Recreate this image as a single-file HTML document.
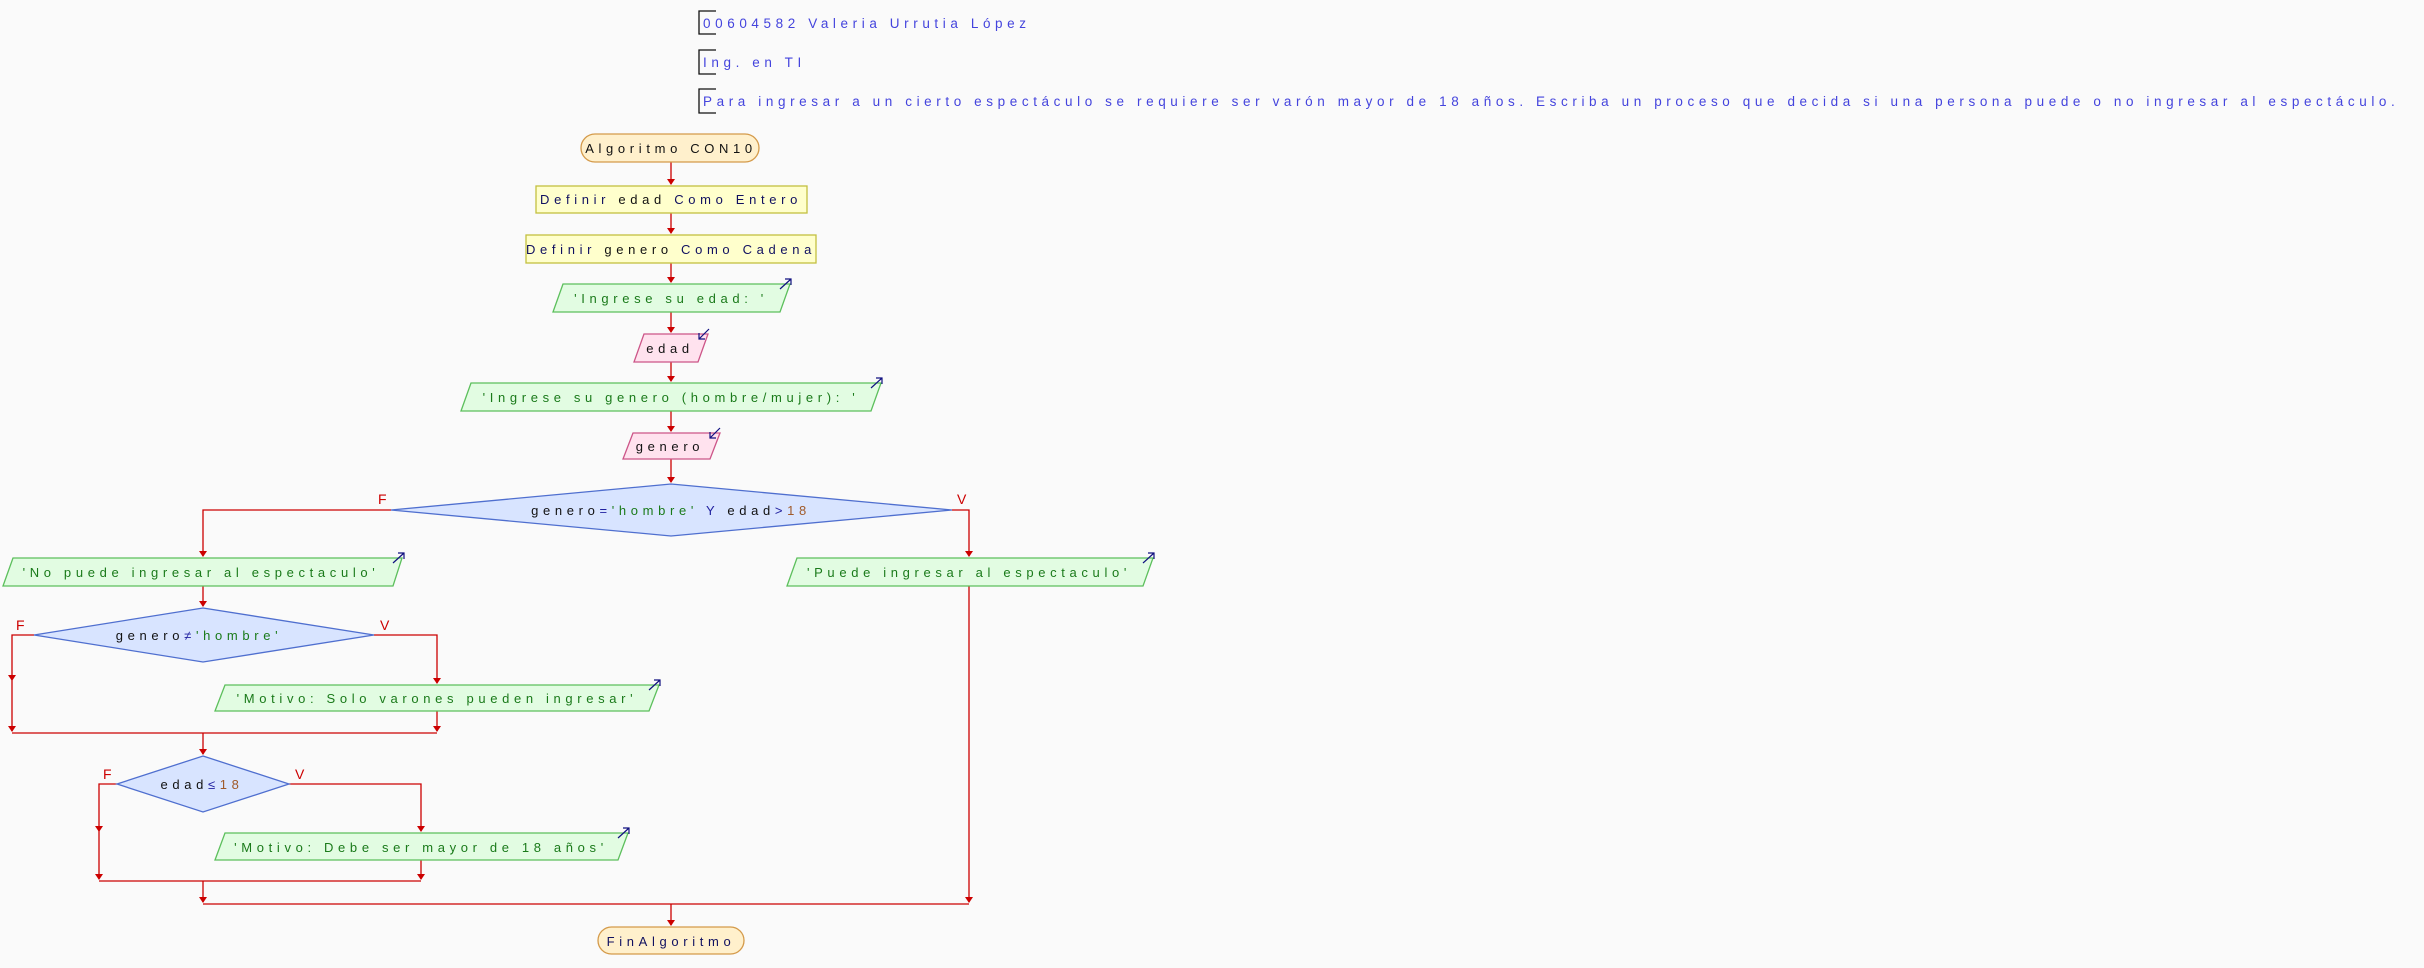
<!DOCTYPE html>
<html><head><meta charset="utf-8"><style>
html,body{margin:0;padding:0;background:#fafafa;}
svg{display:block}
text{font-family:"Liberation Sans",sans-serif;font-size:13px;letter-spacing:4.65px;}
.h{fill:#4444dd;font-size:13.5px;letter-spacing:4.6px}
.k{fill:#101060}.s{fill:#1a7a1a}.n{fill:#a05a2a}.b{fill:#111}.op{fill:#2020a0}
.ln{stroke:#cc0000;stroke-width:1.3;fill:none}
.ah{fill:#cc0000}
.lbl{fill:#cc0000;font-size:14px;letter-spacing:0}
.term{fill:#fff0cc;stroke:#d49a4a;stroke-width:1.3}
.def{fill:#ffffcc;stroke:#c2c040;stroke-width:1.3}
.out{fill:#e2fce2;stroke:#5cbf5c;stroke-width:1.3}
.rd{fill:#ffe2ee;stroke:#cc5588;stroke-width:1.3}
.dec{fill:#d8e4ff;stroke:#4f6fcf;stroke-width:1.3}
.ic{stroke:#101080;stroke-width:1.2;fill:none}
</style></head><body>
<svg width="2424" height="968" viewBox="0 0 2424 968" xmlns="http://www.w3.org/2000/svg">
<g stroke="#111" stroke-width="1.3" fill="none">
<path d="M716 11H699V34H716"/><path d="M716 50H699V74H716"/><path d="M716 89H699V113H716"/>
</g>
<text class="h" x="703" y="28">00604582 Valeria Urrutia López</text>
<text class="h" x="703" y="67">Ing. en TI</text>
<text class="h" x="703" y="106">Para ingresar a un cierto espectáculo se requiere ser varón mayor de 18 años. Escriba un proceso que decida si una persona puede o no ingresar al espectáculo.</text>

<g class="ln">
<path d="M671 162V184"/><path d="M671 213V233"/><path d="M671 263V282"/><path d="M671 312V332"/>
<path d="M671 362V381"/><path d="M671 411V431"/><path d="M671 459V482"/>
<path d="M391 510H203V556"/><path d="M952 510H969V556"/>
<path d="M203 586V606"/>
<path d="M34 635H12V731"/><path d="M374 635H437V683"/><path d="M437 711V731"/><path d="M12 733H437"/>
<path d="M203 733V754"/>
<path d="M117 784H99V879"/><path d="M289 784H421V831"/><path d="M421 860V879"/><path d="M99 881H421"/>
<path d="M203 881V902"/><path d="M969 586V902"/><path d="M203 904H969"/>
<path d="M671 904V925"/>
</g>
<g class="ah">
<path d="M667 179H675L671 185Z"/><path d="M667 228H675L671 234Z"/><path d="M667 277H675L671 283Z"/>
<path d="M667 327H675L671 333Z"/><path d="M667 376H675L671 382Z"/><path d="M667 426H675L671 432Z"/>
<path d="M667 477H675L671 483Z"/>
<path d="M199 551H207L203 557Z"/><path d="M965 551H973L969 557Z"/>
<path d="M199 601H207L203 607Z"/>
<path d="M8 675H16L12 681Z"/><path d="M8 726H16L12 732Z"/>
<path d="M433 678H441L437 684Z"/><path d="M433 726H441L437 732Z"/>
<path d="M199 749H207L203 755Z"/>
<path d="M95 826H103L99 832Z"/><path d="M95 874H103L99 880Z"/>
<path d="M417 826H425L421 832Z"/><path d="M417 874H425L421 880Z"/>
<path d="M199 897H207L203 903Z"/><path d="M965 897H973L969 903Z"/>
<path d="M667 920H675L671 926Z"/>
</g>

<rect class="term" x="581" y="134" width="178" height="28" rx="14"/>
<text class="b" x="671" y="153" text-anchor="middle">Algoritmo CON10</text>
<rect class="def" x="536" y="186" width="271" height="27"/>
<text x="671" y="204" text-anchor="middle"><tspan class="k">Definir </tspan><tspan class="b">edad </tspan><tspan class="k">Como Entero</tspan></text>
<rect class="def" x="526" y="235" width="290" height="28"/>
<text x="671" y="254" text-anchor="middle"><tspan class="k">Definir </tspan><tspan class="b">genero </tspan><tspan class="k">Como Cadena</tspan></text>
<path class="out" d="M563 284H790L780 312H553Z"/>
<text class="s" x="671" y="303" text-anchor="middle">'Ingrese su edad: '</text>
<path class="ic" d="M780 289L791 279M785 279H791V285"/>
<path class="rd" d="M644 334H708L698 362H634Z"/>
<text class="b" x="670" y="353" text-anchor="middle">edad</text>
<path class="ic" d="M709 329L699 339M699 333V339H705"/>
<path class="out" d="M471 383H881L871 411H461Z"/>
<text class="s" x="671" y="402" text-anchor="middle">'Ingrese su genero (hombre/mujer): '</text>
<path class="ic" d="M871 388L882 378M876 378H882V384"/>
<path class="rd" d="M633 433H720L710 459H623Z"/>
<text class="b" x="670" y="451" text-anchor="middle">genero</text>
<path class="ic" d="M720 428L710 438M710 432V438H716"/>
<path class="dec" d="M671 484L952 510L671 536L391 510Z"/>
<text x="671" y="515" text-anchor="middle"><tspan class="b">genero</tspan><tspan class="op">=</tspan><tspan class="s">'hombre' </tspan><tspan class="op">Y </tspan><tspan class="b">edad</tspan><tspan class="op">&gt;</tspan><tspan class="n">18</tspan></text>
<text class="lbl" x="378" y="504">F</text><text class="lbl" x="957" y="504">V</text>
<path class="out" d="M13 558H402L393 586H3Z"/>
<text class="s" x="201" y="577" text-anchor="middle">'No puede ingresar al espectaculo'</text>
<path class="ic" d="M393 563L404 553M398 553H404V559"/>
<path class="out" d="M797 558H1153L1143 586H787Z"/>
<text class="s" x="969" y="577" text-anchor="middle">'Puede ingresar al espectaculo'</text>
<path class="ic" d="M1143 563L1154 553M1148 553H1154V559"/>
<path class="dec" d="M203 608L374 635L203 662L34 635Z"/>
<text x="199" y="640" text-anchor="middle"><tspan class="b">genero</tspan><tspan class="op">≠</tspan><tspan class="s">'hombre'</tspan></text>
<text class="lbl" x="16" y="630">F</text><text class="lbl" x="380" y="630">V</text>
<path class="out" d="M225 685H659L649 711H215Z"/>
<text class="s" x="437" y="703" text-anchor="middle">'Motivo: Solo varones pueden ingresar'</text>
<path class="ic" d="M649 690L660 680M654 680H660V686"/>
<path class="dec" d="M203 756L289 784L203 812L117 784Z"/>
<text x="202" y="789" text-anchor="middle"><tspan class="b">edad</tspan><tspan class="op">≤</tspan><tspan class="n">18</tspan></text>
<text class="lbl" x="103" y="779">F</text><text class="lbl" x="295" y="779">V</text>
<path class="out" d="M225 833H628L618 860H215Z"/>
<text class="s" x="421" y="852" text-anchor="middle">'Motivo: Debe ser mayor de 18 años'</text>
<path class="ic" d="M618 838L629 828M623 828H629V834"/>
<rect class="term" x="598" y="927" width="146" height="27" rx="13.5"/>
<text class="k" x="671" y="946" text-anchor="middle">FinAlgoritmo</text>
</svg>
</body></html>
